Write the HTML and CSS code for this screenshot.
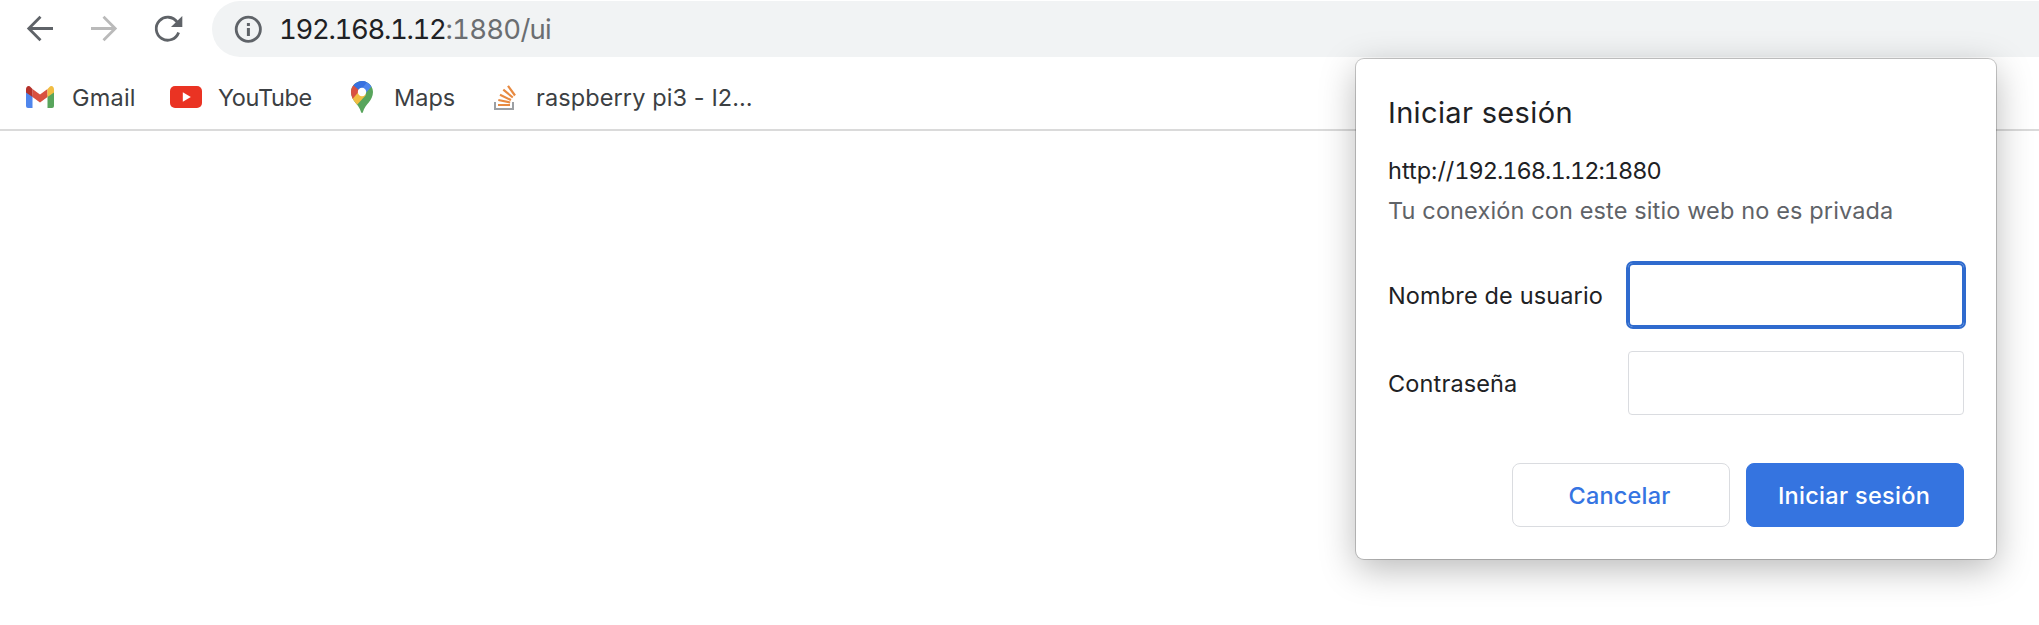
FILE: index.html
```
<!DOCTYPE html>
<html lang="es">
<head>
<meta charset="utf-8">
<title>192.168.1.12:1880/ui</title>
<link rel="stylesheet" href="styles.css">
</head>
<body>
<header class="toolbar">
  <nav class="nav">
    <svg class="nav-icon" viewBox="0 0 32 32"><path class="stroke" d="M29 15.500H5M16.500 3.800L4.800 15.500L16.500 27.200"/></svg>
    <svg class="nav-icon dim" viewBox="0 0 32 32"><path class="stroke" d="M3 15.500H27M15.500 3.800L27.200 15.500L15.500 27.200"/></svg>
    <svg class="nav-icon" viewBox="0 0 32 32"><path class="stroke" d="M25.300 9.300A11.500 11.500 0 1 0 26.600 19.500"/><path class="fill" d="M30.300 3V14H19Z"/></svg>
  </nav>
  <div class="omnibox">
    <svg class="info" viewBox="0 0 28 28"><circle class="stroke" cx="14.300" cy="14.300" r="12.100"/><path class="fill" d="M12.900 8h3v3h-3zM12.900 13h3v8h-3z"/></svg>
    <div class="url"><span class="host">192.168.1.12</span><span class="path">:1880/ui</span></div>
  </div>
</header>
<nav class="bookmarks">
  <a class="bm gmail"><svg width="30" height="24" viewBox="0 0 30 24"><path fill="#4f86ec" d="M1 5L7.500 10V23H3Q1 23 1 21Z"/><path fill="#58a55c" d="M29 5L22.500 10V23H27Q29 23 29 21Z"/><path fill="#d95140" d="M7.500 4L15 9.500L22.500 4V12L15 17.500L7.500 12Z"/><path fill="#b5312a" d="M1 4.500C1 1 4 0 6 2.500L7.500 4V12L1 7.500Z"/><path fill="#f1bd42" d="M29 4.500C29 1 26 0 24 2.500L22.500 4V12L29 7.500Z"/></svg><span>Gmail</span></a>
  <a class="bm youtube"><svg width="32" height="22" viewBox="0 0 32 22"><rect width="32" height="22" rx="5" fill="#ea3323"/><path fill="#fff" d="M12.800 6.300V15.700L20.800 11Z"/></svg><span>YouTube</span></a>
  <a class="bm maps"><svg width="22" height="32" viewBox="0 0 22 32"><defs><clipPath id="pin"><path d="M11 0C17 0 22 5 22 11C22 20 14 23 12 31C11.700 32.200 10.300 32.200 10 31C8 23 0 20 0 11C0 5 5 0 11 0Z"/></clipPath></defs><g clip-path="url(#pin)"><path fill="#58a55c" d="M0 0H22V32H0Z"/><path fill="#4f86ec" d="M11 0H22V4L11 16L6 8Z"/><path fill="#f1bd42" d="M0 18L11 6L15 14L4 26Z"/><path fill="#d95140" d="M0 2L9 9L0 20Z"/><path fill="#3871e0" d="M2 4L9 10L17 0H2Z"/></g><circle cx="11" cy="11" r="4.200" fill="#fff"/></svg><span>Maps</span></a>
  <a class="bm stack"><svg width="24" height="26" viewBox="0 0 24 26"><path fill="none" stroke="#9c9fa3" stroke-width="2" d="M2 18V25H20V18"/><path fill="none" stroke="#e88a41" stroke-width="2.200" d="M5 21H17M5.300 16L17.200 18.500M7 10.800L18 16.100M10.300 5.700L19.800 13.500M15 1.800L22 11.500"/></svg><span>raspberry pi3 - I2…</span></a>
</nav>
<section class="dialog">
  <h1 class="title">Iniciar sesión</h1>
  <p class="origin">http://<span class="address">192.168.1.12:1880</span></p>
  <p class="note">Tu conexión con este sitio web no es privada</p>
  <form class="form">
    <label for="user">Nombre de usuario</label><input id="user" class="field focused" type="text">
    <label for="pass">Contraseña</label><input id="pass" class="field" type="password">
  </form>
  <div class="actions"><button class="btn cancel">Cancelar</button><button class="btn primary">Iniciar sesión</button></div>
</section>
</body>
</html>
```
FILE: styles.css
```
* { box-sizing: border-box; }
body { margin: 0; background: #fff; font-family: Inter, "Liberation Sans", sans-serif; height: 625px; overflow: hidden; position: relative; }

.toolbar { display: flex; height: 58px; padding: 1px 0 1px 24px; }
.nav { display: flex; align-items: center; gap: 32px; width: 188px; flex: none; }
.nav-icon { width: 32px; height: 32px; flex: none; color: #5f6368; }
.nav-icon.dim { color: #bababa; }
.stroke { fill: none; stroke: currentColor; stroke-width: 2.8; }
.fill { fill: currentColor; }
.omnibox { flex: 1; height: 56px; border-radius: 28px 0 0 28px; background: #f1f3f4; display: flex; align-items: center; padding-left: 22px; }
.info { width: 28px; height: 28px; color: #5f6368; margin-right: 17px; }
.url { font-size: 27.5px; color: #202124; white-space: nowrap; font-variant-numeric: tabular-nums; }
.host { letter-spacing: -1.35px; }
.path { color: #6b6e71; letter-spacing: -0.75px; }

.bookmarks { display: flex; height: 73px; align-items: center; padding: 7px 0 0 25px; border-bottom: 2px solid #dadada; }
.bm { display: flex; align-items: center; font-size: 23.5px; color: #3c4043; white-space: nowrap; }
.gmail { width: 145px; gap: 17px; letter-spacing: 0.2px; }
.youtube { width: 181px; gap: 16px; letter-spacing: -0.35px; }
.maps { width: 142px; gap: 21px; }
.stack { gap: 19px; letter-spacing: 0.1px; }

.dialog { position: absolute; left: 1356px; top: 59px; width: 640px; height: 500px; border-radius: 8px; background: #fff; padding: 33px 32px 32px; box-shadow: 0 0 0 1px rgba(0,0,0,.2), 0 10px 36px rgba(0,0,0,.28); font-size: 23.5px; color: #202124; }
h1, p { margin: 0; font-weight: 400; white-space: nowrap; }
.title { font-size: 29px; line-height: 42px; letter-spacing: 0.35px; }
.origin { line-height: 40px; margin-top: 17px; font-variant-numeric: tabular-nums; }
.address { letter-spacing: -1px; }
.note { line-height: 40px; color: #5f6368; letter-spacing: 0.13px; }
.form { display: grid; grid-template-columns: 240px 336px; row-gap: 24px; align-items: center; margin-top: 32px; letter-spacing: 0.14px; }
.field { height: 64px; border: 1px solid #dadce0; border-radius: 4px; outline: none; }
.focused { border: 0; border-radius: 5px; box-shadow: 0 0 0 2px #2f6bce, inset 0 0 0 2px #2f6bce; }
.actions { display: flex; justify-content: flex-end; gap: 16px; margin-top: 48px; }
.btn { width: 218px; height: 64px; border: 1px solid #dadce0; border-radius: 8px; background: #fff; color: #3574e2; font: 500 23.5px Inter, "Liberation Sans", sans-serif; white-space: nowrap; padding: 0 3px 0 0; letter-spacing: 0.2px; }
.primary { background: #3574e0; border-color: #3574e0; color: #fff; letter-spacing: 0.3px; padding-right: 2px; }
```
